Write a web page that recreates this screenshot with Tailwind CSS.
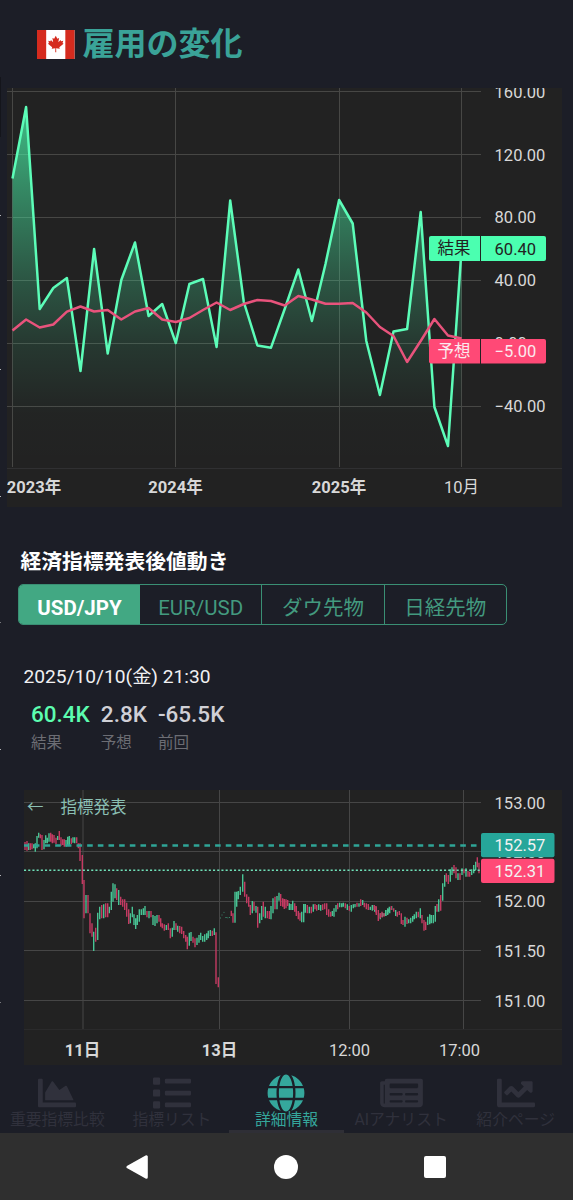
<!DOCTYPE html>
<html lang="ja">
<head>
    <meta charset="UTF-8">
    <meta name="viewport" content="width=device-width, initial-scale=1.0">
    <title>雇用の変化</title>
    <script src="https://cdn.jsdelivr.net/npm/@tailwindcss/browser@4"></script>
</head>
<body class="bg-[#1c1e27] font-['Roboto','Noto_Sans_CJK_JP',sans-serif]">
    <div class="relative w-[573px] h-[1200px] overflow-hidden flex flex-col">
        <!-- Edge of the previous panel -->
        <div class="absolute left-0 top-0 w-0.5">
            <div class="absolute top-[77px] w-px h-[60px] bg-[#14151b]"></div>
            <div class="absolute top-[215px] w-px h-px bg-[#b5b5b8]"></div>
            <div class="absolute top-[369px] w-px h-px bg-[#b5b5b8]"></div>
            <div class="absolute top-[496px] w-px h-px bg-[#b5b5b8]"></div>
            <div class="absolute top-[622px] w-px h-px bg-[#77787d]"></div>
            <div class="absolute top-[749px] w-px h-px bg-[#b5b5b8]"></div>
            <div class="absolute top-[875px] w-px h-px bg-[#b5b5b8]"></div>
            <div class="absolute top-[1002px] w-px h-px bg-[#77787d]"></div>
        </div>

        <!-- Header -->
        <header class="h-[88px] pl-[37px] flex items-center gap-2">
            <svg class="w-[37.5px] h-[29px]" viewBox="0 0 38 29" preserveAspectRatio="none">
                <path fill="#fff" d="M0 0h38v29H0z"></path>
                <path fill="#d52b1e" d="M0 0h9.3v29H0zM28.7 0H38v29h-9.3z"></path>
                <path fill="#d52b1e" d="M19 5.800l1.600 3 1.800-.9-.8 4.400 2.300-2.300.5 1.200 2.200-.4-.7 2.300 1 .6-4.300 3.600.5 1.500-3.700-.6.1 4h-1l.1-4-3.700.6.5-1.500-4.300-3.600 1-.6-.7-2.300 2.200.4.5-1.200 2.300 2.300-.8-4.400 1.800.9z"></path>
            </svg>
            <h1 class="text-[32px] leading-none font-bold text-[#3aa398]">雇用の変化</h1>
        </header>

        <!-- Indicator chart -->
        <svg class="ml-[7px] w-[555px] h-[419px] shrink-0 bg-[#222]" viewBox="7 88 555 419">
            <defs>
                <linearGradient id="area" gradientUnits="userSpaceOnUse" x1="0" y1="88" x2="0" y2="467">
                    <stop offset="0" stop-color="#4bffb0" stop-opacity=".76"></stop>
                    <stop offset=".25" stop-color="#4bffb0" stop-opacity=".48"></stop>
                    <stop offset=".5" stop-color="#4bffb0" stop-opacity=".24"></stop>
                    <stop offset=".68" stop-color="#4bffb0" stop-opacity=".1"></stop>
                    <stop offset=".86" stop-color="#4bffb0" stop-opacity=".01"></stop>
                    <stop offset="1" stop-color="#4bffb0" stop-opacity="0"></stop>
                </linearGradient>
            </defs>
            <path stroke="#474745" d="M7 91.5h474M7 154.5h474M7 217.5h474M7 280.5h474M7 343.5h474M7 406.5h474M12.5 88v379M175.5 88v379M339.5 88v379M461.5 88v379"></path>
            <path stroke="#303032" d="M7 468.5h555"></path>
            <path fill="url(#area)" d="M12.5 178.5L26.1 107 39.7 309 53.3 288 66.9 278 80.5 371 94.1 249 107.7 353.5 121.3 280 135 242.5 148.6 316 162.2 304 175.8 343 189.4 284 203 279 216.6 347 230.2 200.5 243.8 302 257.4 345.5 271 347.7 284.7 309 298.3 269.5 311.9 321 325.5 264 339.1 200 352.7 223.5 366.3 341 379.9 395 393.5 331.5 407.1 329 420.7 212 434.4 407 448 447 461.6 248V467H12.5z"></path>
            <polyline fill="none" stroke="#5cfdb8" stroke-width="2.5" stroke-linejoin="round" points="12.5,178.5 26.1,107 39.7,309 53.3,288 66.9,278 80.5,371 94.1,249 107.7,353.5 121.3,280 135,242.5 148.6,316 162.2,304 175.8,343 189.4,284 203,279 216.6,347 230.2,200.5 243.8,302 257.4,345.5 271,347.7 284.7,309 298.3,269.5 311.9,321 325.5,264 339.1,200 352.7,223.5 366.3,341 379.9,395 393.5,331.5 407.1,329 420.7,212 434.4,407 448,446 461.6,248"></polyline>
            <polyline fill="none" stroke="#e8537c" stroke-width="2.5" stroke-linejoin="round" points="12.5,330.5 26.1,319.5 39.7,327.5 53.3,324.5 66.9,311.7 80.5,306.5 94.1,311.5 107.7,310 121.3,319.5 135,311.5 148.6,308 162.2,319.5 175.8,322 189.4,318 203,310 216.6,302.5 230.2,310 243.8,304 257.4,300 271,301 284.7,305.5 298.3,296 311.9,299.5 325.5,303.8 339.1,303.8 352.7,303 366.3,312.5 379.9,327 393.5,336 407.1,362 420.7,341 434.4,319 448,335.5 461.6,338.5"></polyline>
            <g class="text-[16.5px] fill-[#d8d8d8]">
                <text x="494.6" y="97.7">160.00</text>
                <text x="494.6" y="160.5">120.00</text>
                <text x="494.6" y="223.2">80.00</text>
                <text x="494.6" y="286.2">40.00</text>
                <text x="494.6" y="349">0.00</text>
                <text x="494.6" y="412.4">−40.00</text>
            </g>
            <g class="text-[16.5px] fill-[#d8d8d8]" text-anchor="middle">
                <text class="font-bold" x="34" y="492.5">2023年</text>
                <text class="font-bold" x="175.500" y="492.5">2024年</text>
                <text class="font-bold" x="339" y="492.5">2025年</text>
                <text x="461.5" y="492.5">10月</text>
            </g>
            <!-- Last value tags -->
            <rect x="429" y="236" width="117" height="25" rx="2" fill="#4bffb0"></rect>
            <path stroke="#222" d="M480.5 236v25"></path>
            <g class="text-[16.5px] fill-[#222]">
                <text x="437.5" y="254.3">結果</text>
                <text x="494.6" y="254.5">60.40</text>
            </g>
            <rect x="429" y="339" width="117" height="24.5" rx="2" fill="#ff4976"></rect>
            <path stroke="#222" d="M480.5 339v25"></path>
            <g class="text-[16.5px] fill-[#fbe9ee]">
                <text x="437.5" y="357.3">予想</text>
                <text x="494.6" y="357.4">−5.00</text>
            </g>
        </svg>

        <!-- Price move after the release -->
        <h2 class="mt-[43.5px] pl-[20.5px] h-[22px] leading-[22px] text-[20.8px] font-bold text-white">経済指標発表後値動き</h2>
        <div class="mt-[11.5px] ml-[18px] w-[489px] h-[41px] shrink-0 flex rounded-[5px] border-[1.5px] border-[#3a8f74] overflow-hidden text-[20.5px] text-[#439a7f]">
            <button class="w-[121px] pt-[7px] bg-[#42a883] text-white font-bold">USD/JPY</button>
            <button class="flex-1 pt-[7px]">EUR/USD</button>
            <button class="flex-1 pt-[7px] border-l border-[#3a8f74]">ダウ先物</button>
            <button class="flex-1 pt-[7px] border-l border-[#3a8f74]">日経先物</button>
        </div>

        <p class="mt-[41px] pl-[23.5px] h-[22px] leading-[22px] text-[19.2px] text-[#f0f0f2]">2025/10/10(金) 21:30</p>
        <dl class="mt-[13px] pl-[31px] h-[53px] flex gap-[11px] text-[#d0d0d6]">
            <div class="flex flex-col">
                <dd class="text-[22.5px] leading-[26px] font-medium text-[#5cfdb0]">60.4K</dd>
                <dt class="mt-[5px] text-[15.5px] leading-[22px] text-[#6c6d74]">結果</dt>
            </div>
            <div class="flex flex-col">
                <dd class="text-[22.5px] leading-[26px] font-medium">2.8K</dd>
                <dt class="mt-[5px] text-[15.5px] leading-[22px] text-[#6c6d74]">予想</dt>
            </div>
            <div class="flex flex-col">
                <dd class="text-[22.5px] leading-[26px] font-medium">-65.5K</dd>
                <dt class="mt-[5px] text-[15.5px] leading-[22px] text-[#6c6d74]">前回</dt>
            </div>
        </dl>

        <!-- USD/JPY chart -->
        <svg class="mt-[36px] ml-[24px] w-[538px] h-[275px] shrink-0 bg-[#222]" viewBox="24 790 538 275">
            <path stroke="#464646" d="M24 802.5h457M24 851.5h457M24 901.5h457M24 950.5h457M24 1000.5h457M83 790v239M219.5 790v239M349.5 790v239M463.5 790v239"></path>
            <path stroke="#2a2a2b" d="M24 1029.5h538"></path>
            <path id="candles-up" fill="none" stroke="#48c394" stroke-width="1.4"></path>
            <path id="candles-down" fill="none" stroke="#c43a62" stroke-width="1.4"></path>
            <path stroke="#38856a" d="M220 918h1M221.5 915h1M223.5 912.4h1M225.3 917.5h1.5M227.3 917.8h1M229 917.5h1"></path>
            <path stroke="#2fa597" stroke-width="2.6" stroke-dasharray="5.6 5.06" d="M23.2 845.5H481"></path>
            <path stroke="#6fe0b8" stroke-width="1.4" stroke-dasharray="2.1 2.1" d="M24 870.2H481"></path>
            <g class="text-[16.5px] fill-[#8abfb3]">
                <text x="27" y="812.5">←</text>
                <text x="60.5" y="813.300">指標発表</text>
            </g>
            <g class="text-[16.5px] fill-[#d8d8d8]">
                <text x="494.6" y="808.5">153.00</text>
                <text x="494.6" y="857.8">152.50</text>
                <text x="494.6" y="907.2">152.00</text>
                <text x="494.6" y="957">151.50</text>
                <text x="494.6" y="1006.5">151.00</text>
            </g>
            <g class="text-[16.5px] fill-[#d8d8d8]" text-anchor="middle">
                <text class="font-bold" x="82.5" y="1055.800">11日</text>
                <text class="font-bold" x="219.5" y="1055.800">13日</text>
                <text x="349.5" y="1055.800">12:00</text>
                <text x="459.5" y="1055.800">17:00</text>
            </g>
            <rect x="481" y="833" width="73.5" height="24.3" rx="2" fill="#26a69a"></rect>
            <rect x="481" y="858.7" width="73.5" height="24.3" rx="2" fill="#ff4976"></rect>
            <g class="text-[16.5px] fill-[#f2f2f2]">
                <text x="494.6" y="851.3">152.57</text>
                <text x="494.6" y="876.7">152.31</text>
            </g>
        </svg>

        <!-- Tab bar -->
        <nav class="relative h-[68px] shrink-0 grid grid-cols-5 text-[15.8px] leading-[20px] text-[#30313c]">
            <a class="flex flex-col items-center pt-[8.5px] whitespace-nowrap">
                <svg class="h-[38px] w-[38px] shrink-0" fill="currentColor" viewBox="0 0 512 512"><path d="M500 384c6.6 0 12 5.4 12 12v40c0 6.6-5.4 12-12 12H12c-6.6 0-12-5.4-12-12V76c0-6.6 5.4-12 12-12h40c6.6 0 12 5.4 12 12v308h436zM372.7 159.5L288 216l-85.3-113.7c-5.1-6.8-15.5-6.3-19.9 1L96 248v104h384l-89.900-187.800c-3.200-6.500-11.400-8.700-17.400-4.700z"></path></svg>
                <span class="-mt-[2px]">重要指標比較</span>
            </a>
            <a class="flex flex-col items-center pt-[8.5px] whitespace-nowrap">
                <svg class="h-[38px] w-[38px] shrink-0" fill="currentColor" viewBox="0 0 512 512"><path d="M80 368H16a16 16 0 0 0-16 16v64a16 16 0 0 0 16 16h64a16 16 0 0 0 16-16v-64a16 16 0 0 0-16-16zm0-320H16A16 16 0 0 0 0 64v64a16 16 0 0 0 16 16h64a16 16 0 0 0 16-16V64a16 16 0 0 0-16-16zm0 160H16a16 16 0 0 0-16 16v64a16 16 0 0 0 16 16h64a16 16 0 0 0 16-16v-64a16 16 0 0 0-16-16zm416 176H176a16 16 0 0 0-16 16v32a16 16 0 0 0 16 16h320a16 16 0 0 0 16-16v-32a16 16 0 0 0-16-16zm0-320H176a16 16 0 0 0-16 16v32a16 16 0 0 0 16 16h320a16 16 0 0 0 16-16V80a16 16 0 0 0-16-16zm0 160H176a16 16 0 0 0-16 16v32a16 16 0 0 0 16 16h320a16 16 0 0 0 16-16v-32a16 16 0 0 0-16-16z"></path></svg>
                <span class="-mt-[2px]">指標リスト</span>
            </a>
            <a class="flex flex-col items-center pt-[8.5px] whitespace-nowrap text-[#35a79c]">
                <svg class="h-[38px] w-[38px] shrink-0" fill="currentColor" viewBox="0 0 496 512"><path d="M336.5 160C322 70.7 287.8 8 248 8s-74 62.7-88.5 152h177zM152 256c0 22.2 1.2 43.5 3.3 64h185.3c2.1-20.5 3.3-41.8 3.3-64s-1.2-43.5-3.3-64H155.3c-2.1 20.5-3.3 41.8-3.3 64zm324.700-96c-28.600-67.900-86.500-120.400-158-141.600 24.400 33.800 41.200 84.700 50 141.600h108zM177.200 18.400C105.800 39.600 47.800 92.100 19.300 160h108c8.700-56.900 25.500-107.800 49.900-141.600zM487.400 192H372.700c2.100 21 3.300 42.500 3.300 64s-1.200 43-3.300 64h114.600c5.500-20.500 8.600-41.800 8.600-64s-3.100-43.500-8.500-64zM120 256c0-21.500 1.200-43 3.300-64H8.600C3.200 212.500 0 233.800 0 256s3.200 43.500 8.600 64h114.600c-2-21-3.200-42.500-3.200-64zm39.500 96c14.500 89.300 48.700 152 88.500 152s74-62.700 88.500-152h-177zm159.300 141.600c71.400-21.200 129.400-73.700 158-141.600h-108c-8.800 56.900-25.600 107.800-50 141.600zM19.300 352c28.600 67.900 86.500 120.400 158 141.600-24.400-33.800-41.200-84.700-50-141.600h-108z"></path></svg>
                <span class="-mt-[2px]">詳細情報</span>
            </a>
            <a class="flex flex-col items-center pt-[8.5px] whitespace-nowrap">
                <svg class="h-[38px] w-[43px] shrink-0" fill="currentColor" viewBox="0 0 576 512"><path d="M552 64H88c-13.255 0-24 10.745-24 24v8H24c-13.255 0-24 10.745-24 24v272c0 30.928 25.072 56 56 56h472c26.510 0 48-21.490 48-48V88c0-13.255-10.745-24-24-24zM56 400a8 8 0 0 1-8-8V144h16v248a8 8 0 0 1-8 8zm236-16H140c-6.627 0-12-5.373-12-12v-8c0-6.627 5.373-12 12-12h152c6.627 0 12 5.373 12 12v8c0 6.627-5.373 12-12 12zm208 0H348c-6.627 0-12-5.373-12-12v-8c0-6.627 5.373-12 12-12h152c6.627 0 12 5.373 12 12v8c0 6.627-5.373 12-12 12zm-208-96H140c-6.627 0-12-5.373-12-12v-8c0-6.627 5.373-12 12-12h152c6.627 0 12 5.373 12 12v8c0 6.627-5.373 12-12 12zm208 0H348c-6.627 0-12-5.373-12-12v-8c0-6.627 5.373-12 12-12h152c6.627 0 12 5.373 12 12v8c0 6.627-5.373 12-12 12zm0-96H140c-6.627 0-12-5.373-12-12v-40c0-6.627 5.373-12 12-12h360c6.627 0 12 5.373 12 12v40c0 6.627-5.373 12-12 12z"></path></svg>
                <span class="-mt-[2px]">AIアナリスト</span>
            </a>
            <a class="flex flex-col items-center pt-[8.5px] whitespace-nowrap">
                <svg class="h-[38px] w-[38px] shrink-0" fill="currentColor" viewBox="0 0 512 512"><path d="M496 384H64V80c0-8.840-7.160-16-16-16H16C7.160 64 0 71.160 0 80v336c0 17.670 14.330 32 32 32h464c8.840 0 16-7.160 16-16v-32c0-8.840-7.160-16-16-16zM464 96H345.940c-21.380 0-32.090 25.850-16.970 40.970l32.400 32.400L288 242.750l-73.370-73.370c-12.500-12.500-32.760-12.500-45.250 0l-68.690 68.690c-6.250 6.250-6.250 16.380 0 22.630l22.620 22.620c6.250 6.250 16.380 6.250 22.630 0L192 237.250l73.370 73.370c12.500 12.500 32.760 12.500 45.250 0l96-96 32.400 32.400c15.120 15.120 40.970 4.410 40.970-16.970V112c.010-8.840-7.150-16-15.990-16z"></path></svg>
                <span class="-mt-[2px]">紹介ページ</span>
            </a>
            <div class="absolute bottom-0 left-[229px] w-[115px] h-[3px] bg-[#2f2f36]"></div>
        </nav>

        <!-- Android navigation -->
        <footer class="h-[67px] shrink-0 bg-[#2f2f2f] flex items-center pl-[124px] gap-[126px]">
            <svg class="w-[24px] h-[24px]" viewBox="0 0 24 24"><path fill="#fff" stroke="#fff" stroke-width="3" stroke-linejoin="round" d="M22.300 1.800v20.400L4 12z"></path></svg>
            <div class="w-[24px] h-[24px] rounded-full bg-white"></div>
            <div class="w-[22px] h-[22px] rounded-[2px] bg-white"></div>
        </footer>
    </div>

    <script>
        // Each candle: x, high, low, direction, in thirds of a pixel from the session origin
        const sessions = [
            { origin: 0, candles: '75 186 210 r,81 183 212 r,86 190 210 g,91 190 210 r,96 190 208 r,101 193 205 g,106 190 215 g,111 168 205 g,116 158 173 g,121 163 175 r,126 165 210 r,132 180 208 g,137 166 190 g,142 173 190 g,147 160 185 g,152 158 185 r,157 163 190 r,162 165 188 r,168 173 192 r,173 168 180 g,178 153 180 r,183 172 197 r,188 178 195 r,193 178 200 r,198 180 200 g,203 170 198 g,208 168 195 g,214 175 192 r,219 172 188 g,224 172 190 g,230 172 190 r,235 190 205 r,240 190 243 r,247 225 312 r,252 300 415 r,258 345 400 g,264 345 400 r,270 400 460 r,276 430 470 r,281 455 513 g,287 443 485 r,293 398 480 g,299 380 418 g,305 375 415 r,311 373 415 g,317 370 412 r,323 370 412 r,328 380 400 g,334 335 390 g,339 310 365 g,345 313 355 g,350 325 360 r,356 330 375 g,362 350 375 r,368 358 380 r,374 358 390 r,380 368 410 r,386 388 432 r,391 400 430 g,397 380 412 g,402 403 435 g,407 415 447 g,412 405 435 g,418 388 425 g,424 388 405 g,430 385 405 g,435 378 405 g,441 393 412 r,447 393 415 g,453 393 412 r,459 405 435 g,465 408 438 g,471 405 430 g,477 405 425 r,482 415 440 r,487 430 445 r,493 433 452 r,499 435 450 g,505 430 450 r,511 445 475 r,517 443 470 g,522 423 450 g,528 430 450 r,533 437 455 g,539 438 460 r,545 440 462 r,551 453 475 r,557 465 485 r,562 470 508 r,568 458 497 g,573 456 483 g,579 470 488 r,585 475 502 r,591 473 495 g,597 465 488 g,602 458 480 g,608 468 485 g,614 463 485 g,620 460 480 g,625 452 475 g,631 450 468 g,637 452 468 r,643 445 465 g,648 457 612 r,655 592 622 r' },
            { origin: 600, candles: '94 392 408 r,99 400 428 r,105 335 428 g,110 335 380 g,115 333 358 g,121 320 345 g,128 283 335 g,134 305 350 r,140 343 370 r,146 350 380 r,151 375 405 r,157 363 400 g,162 365 392 r,168 378 398 g,173 380 443 r,179 400 430 g,185 378 420 g,190 365 410 r,196 380 415 g,202 393 415 r,208 393 417 r,213 378 418 g,219 355 400 g,225 350 388 r,231 348 388 g,237 338 362 g,242 342 378 r,248 355 380 r,253 357 387 r,258 358 385 r,263 360 378 r,268 370 390 g,273 372 390 g,278 362 390 g,284 370 395 r,289 378 408 r,295 393 418 r,300 398 422 r,305 395 427 g,311 372 427 g,316 372 398 g,322 375 400 r,328 380 400 g,334 380 400 r,340 373 395 g,345 372 388 r,350 375 392 r,356 373 390 g,362 375 392 g,368 373 390 r,374 370 388 r,380 370 405 r,386 388 410 r,392 395 410 r,397 393 408 g,402 385 410 g,408 375 395 g,413 370 388 r,419 368 382 g,425 370 382 g,430 368 380 g,436 370 385 r,442 373 390 g,448 378 392 r,454 375 395 g,460 373 385 g,465 372 382 g,471 368 380 r,477 370 380 g,482 358 378 r,488 360 375 g,493 368 382 r,499 370 388 r,505 372 390 r,511 380 390 g,517 375 392 g,523 375 390 r,528 378 400 r,535 390 420 r,541 400 418 g,546 395 412 r,552 400 408 g,557 390 408 g,563 385 405 g,568 380 395 g' },
            { origin: 1110, candles: '64 378 390 r,8 375 390 g,14 378 395 g,19 380 405 r,25 393 423 r,31 400 415 r,37 398 412 g,42 400 410 r,48 390 408 g,54 388 402 g,59 383 400 g,65 378 390 g,71 385 395 r,77 390 408 g,82 395 410 r,88 393 405 r,94 400 432 r,99 420 435 r,105 410 440 g,111 413 432 r,116 418 430 g,122 413 430 g,128 408 425 g,133 403 418 g,139 395 415 g,145 395 412 r,151 385 415 g,156 405 430 r,162 420 452 r,167 425 450 r,173 410 435 g,179 403 433 g,184 405 430 g,190 405 430 g,196 378 425 g,201 372 395 r,206 358 395 g,212 345 392 r,218 310 362 g,224 285 320 g,229 280 305 r,235 285 312 r,241 268 305 g,246 262 285 g,252 255 280 r,258 262 295 r,264 280 300 g,270 280 300 r,276 265 285 g,282 268 280 r,288 265 290 g,294 273 290 r,299 275 290 r,305 268 285 g,311 255 280 g,317 245 270 g,322 232 262 r,327 248 280 r' }
        ];

        const paths = { g: '', r: '' };
        sessions.forEach(session => {
            session.candles.split(',').forEach(candle => {
                const [x, high, low, dir] = candle.split(' ');
                const px = ((session.origin + Number(x)) / 3).toFixed(1);
                paths[dir] += `M${px} ${(780 + high / 3).toFixed(1)}V${(780 + low / 3).toFixed(1)}`;
            });
        });
        document.getElementById('candles-up').setAttribute('d', paths.g);
        document.getElementById('candles-down').setAttribute('d', paths.r);
    </script>
</body>
</html>
